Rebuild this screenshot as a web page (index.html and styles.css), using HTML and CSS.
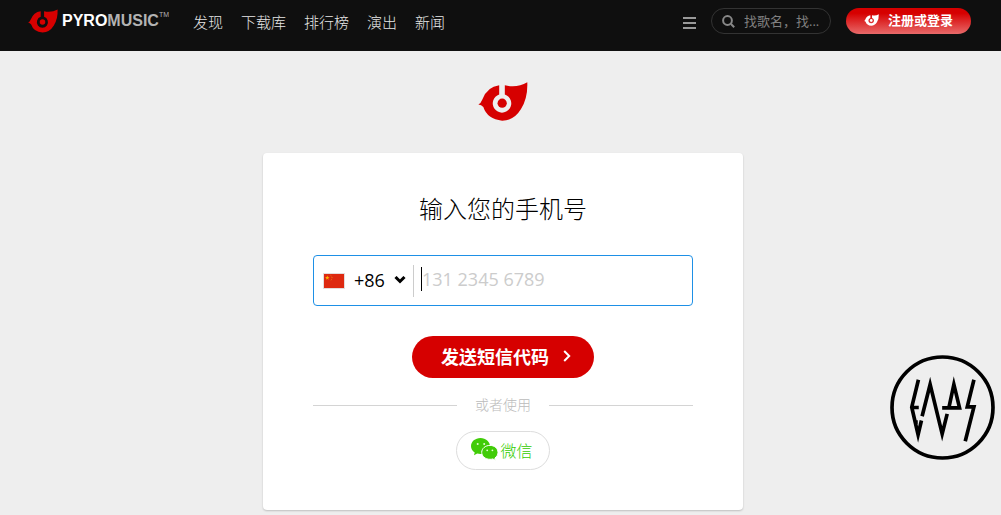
FILE: index.html
```html
<!DOCTYPE html>
<html lang="zh-CN">
<head>
<meta charset="utf-8">
<meta name="viewport" content="width=device-width, initial-scale=1">
<title>PyroMusic</title>
<link rel="stylesheet" href="styles.css">
</head>
<body>
<svg class="sprite" aria-hidden="true">
  <symbol id="flame" viewBox="54 35 151 118">
    <path fill-rule="evenodd" d="M55 103 Q63 99 67 88 Q82 49 118 45 V73 A28 28 0 1 0 135 73 V45 Q172 54 203 36 Q205 83 184 117 Q163 152 127 152 Q82 148 70 111 Q64 104 55 103Z"/>
    <circle cx="127" cy="99" r="14"/>
  </symbol>
</svg>
<header class="topbar">
  <a class="brand" href="#" aria-label="PyroMusic">
    <svg class="brand-mark" aria-hidden="true"><use href="#flame"/></svg>
    <span class="brand-name">PYRO<span class="brand-light">MUSIC</span></span><span class="brand-tm">TM</span>
  </a>
  <nav class="nav">
    <a href="#">发现</a>
    <a href="#">下载库</a>
    <a href="#">排行榜</a>
    <a href="#">演出</a>
    <a href="#">新闻</a>
  </nav>
  <button class="menu" type="button" aria-label="菜单"><span></span><span></span><span></span></button>
  <label class="search">
    <svg class="search-icon" viewBox="0 0 13 13" aria-hidden="true"><circle cx="5.500" cy="5.500" r="4.400"/><path d="M9 9l3.200 3.200"/></svg>
    <input type="text" placeholder="找歌名，找..." aria-label="搜索">
  </label>
  <button class="login" type="button">
    <svg class="login-mark" aria-hidden="true"><use href="#flame"/></svg>
    <span>注册或登录</span>
  </button>
</header>
<main class="page">
  <svg class="page-mark" aria-hidden="true"><use href="#flame"/></svg>
  <form class="card">
    <h1>输入您的手机号</h1>
    <div class="phone">
      <svg class="flag" viewBox="0 0 22 16" aria-hidden="true">
        <rect width="22" height="16" fill="#e4dcdc"/>
        <rect x="1" y="1" width="20" height="14" fill="#de2910"/>
        <path d="M4.300 2.400l.6 1.600h1.700l-1.400 1.100.5 1.600-1.400-1-1.400 1 .5-1.600L2 4h1.700z" fill="#ffb400"/>
        <path d="M7.500 2.200l1 .9M9 4v1.200M8.800 6.400l-1 .9" stroke="#e88a10" stroke-width=".8"/>
      </svg>
      <div class="code">
        <select aria-label="国家代码"><option>+86</option></select>
        <svg class="chevron" viewBox="0 0 12 8" aria-hidden="true"><path d="M1.500 1L6 5.500 10.500 1"/></svg>
      </div>
      <span class="divider"></span>
      <span class="caret"></span>
      <input type="tel" placeholder="131 2345 6789" aria-label="手机号">
    </div>
    <button class="send" type="button">
      <span>发送短信代码</span>
      <svg class="arrow" viewBox="0 0 8 12" aria-hidden="true"><path d="M1.200 1L6.200 6l-5 5"/></svg>
    </button>
    <div class="or"><span>或者使用</span></div>
    <button class="wechat" type="button">
      <svg class="wechat-icon" viewBox="0 0 27 23" aria-hidden="true">
        <path fill="#41cc08" d="M9.500 0C4.200 0 0 3.600 0 8.200c0 2.600 1.400 4.800 3.700 6.300L3 17.200l3.200-1.600c1 .3 2.100.5 3.300.5 5.300 0 9.500-3.500 9.500-7.900S14.800 0 9.500 0z"/>
        <path fill="#41cc08" stroke="#fff" d="M19 7.400c-4.700 0-8.300 3.100-8.300 7 0 3.800 3.600 6.900 8.300 6.900 1 0 1.900-.1 2.700-.4l2.800 1.400-.6-2.300c1.900-1.300 3.100-3.300 3.100-5.600 0-3.900-3.500-7-8-7z"/>
        <g fill="#e1ffd2"><circle cx="6.700" cy="6" r="1"/><circle cx="13.200" cy="6" r="1"/><circle cx="16.200" cy="12.300" r=".9"/><circle cx="21.400" cy="12.300" r=".9"/></g>
      </svg>
      <span>微信</span>
    </button>
  </form>
</main>
<svg class="badge" viewBox="31 29 314 314" aria-hidden="true">
  <circle cx="188" cy="186" r="151"/>
  <path d="M116 103L96 185l19 82 10-42M96 186h21M103 230h11M127 212L151 117l36 148 15-60M187 187h52L222 117l-15 70M282 103l-20 81h20l-26 103"/>
</svg>
</body>
</html>
```

FILE: styles.css
```css
* {
  box-sizing: border-box;
}

body {
  margin: 0;
  min-height: 100vh;
  background: #eee;
  color: #000;
  font-family: "Open Sans", "Noto Sans CJK SC", sans-serif;
  font-size: 15px;
}

button,
input,
select {
  font: inherit;
  margin: 0;
  padding: 0;
  border: 0;
  background: none;
  outline: 0;
}

button {
  cursor: pointer;
}

.sprite {
  display: none;
}

.topbar {
  display: flex;
  align-items: flex-start;
  height: 51px;
  padding: 8px 30px 0 28px;
  background: #0f0f0f;
}

.brand {
  display: flex;
  align-items: center;
  height: 26px;
  color: #fff;
  text-decoration: none;
}

.brand-mark {
  width: 30px;
  height: 24px;
  margin-right: 4px;
  fill: #d60000;
}

.brand-name {
  font-family: "Liberation Sans", sans-serif;
  font-size: 16px;
  font-weight: bold;
  line-height: 26px;
}

.brand-light {
  color: #b3b3b3;
}

.brand-tm {
  align-self: flex-start;
  color: #b3b3b3;
  font-family: "Liberation Sans", sans-serif;
  font-size: 7px;
  line-height: 14px;
}

.nav {
  display: flex;
  flex: 1;
  gap: 18px;
  margin-left: 24px;
}

.nav a {
  color: #e6e6e6;
  font-weight: 300;
  line-height: 28px;
  text-decoration: none;
  white-space: nowrap;
}

.menu {
  display: flex;
  flex-direction: column;
  gap: 3px;
  width: 13px;
  margin: 9px 15px 0 0;
}

.menu span {
  height: 2px;
  background: #999;
}

.search {
  display: flex;
  align-items: center;
  gap: 9px;
  width: 120px;
  height: 26px;
  margin-right: 15px;
  padding: 0 10px;
  border: 1px solid #333;
  border-radius: 13px;
}

.search-icon {
  flex: none;
  width: 13px;
  height: 13px;
  fill: none;
  stroke: #888;
  stroke-width: 2;
}

.search input {
  flex: 1;
  min-width: 0;
  color: #888;
  font-size: 13px;
}

.search input::placeholder {
  color: #808080;
  opacity: 1;
}

.login {
  display: flex;
  align-items: center;
  justify-content: center;
  gap: 9px;
  width: 125px;
  height: 26px;
  padding-bottom: 2px;
  border-radius: 13px;
  background: linear-gradient(#d60000 20%, #e86a6a);
  color: #fff;
  font-size: 13px;
  font-weight: bold;
  line-height: 24px;
}

.login-mark {
  width: 15px;
  height: 12px;
  fill: #fff;
}

.page {
  display: flex;
  flex-direction: column;
  align-items: center;
  padding: 31px 0 4px 5px;
}

.page-mark {
  width: 50px;
  height: 39px;
  fill: #d60000;
}

.card {
  display: flex;
  flex-direction: column;
  align-items: center;
  width: 100%;
  max-width: 480px;
  margin-top: 32px;
  padding: 39px 50px 40px;
  border-radius: 4px;
  background: #fff;
  box-shadow: 0 1px 2px rgba(0, 0, 0, .2);
}

h1 {
  margin: 0;
  font-size: 24px;
  font-weight: 300;
  line-height: 34px;
}

.phone {
  display: flex;
  align-items: center;
  align-self: stretch;
  height: 51px;
  margin-top: 29px;
  padding: 0 9px;
  border: 1px solid #1e90e6;
  border-radius: 4px;
  font-size: 18px;
}

.flag {
  flex: none;
  width: 22px;
  height: 16px;
}

.code {
  display: flex;
  align-items: center;
  margin-left: 9px;
  padding-bottom: 2px;
}

.code select {
  width: 40px;
  appearance: none;
  color: #000;
}

.chevron {
  width: 12px;
  height: 8px;
  fill: none;
  stroke: #000;
  stroke-width: 3;
}

.divider {
  width: 1px;
  height: 32px;
  margin: 0 7px;
  background: #ccc;
}

.caret {
  width: 1px;
  height: 24px;
  margin-bottom: 3px;
  background: #000;
}

.phone input {
  flex: 1;
  min-width: 0;
  margin-bottom: 4px;
}

.phone input::placeholder {
  color: #ccc;
  opacity: 1;
}

.send {
  display: flex;
  align-items: center;
  justify-content: center;
  gap: 14px;
  width: 182px;
  height: 42px;
  margin-top: 30px;
  padding: 0 0 2px 6px;
  border-radius: 21px;
  background: #d60000;
  color: #fff;
  font-size: 18px;
  font-weight: bold;
}

.arrow {
  width: 8px;
  height: 12px;
  fill: none;
  stroke: #fff;
  stroke-width: 2;
}

.or {
  display: flex;
  align-items: center;
  align-self: stretch;
  gap: 18px;
  margin-top: 17px;
  color: #bbb;
  font-size: 14px;
  font-weight: 300;
  line-height: 20px;
}

.or::before,
.or::after {
  flex: 1;
  height: 1px;
  background: #d4d4d4;
  content: "";
}

.wechat {
  display: flex;
  align-items: center;
  justify-content: center;
  gap: 2px;
  width: 94px;
  height: 39px;
  margin-top: 16px;
  padding: 0 2px 2px 0;
  border: 1px solid #ddd;
  border-radius: 20px;
  color: #3c0;
  font-size: 16px;
  font-weight: 300;
}

.wechat-icon {
  width: 27px;
  height: 23px;
}

.badge {
  position: fixed;
  right: 6px;
  bottom: 55px;
  width: 105px;
  height: 105px;
  fill: none;
  stroke: #000;
  stroke-width: 11;
  stroke-miterlimit: 12;
}
```
